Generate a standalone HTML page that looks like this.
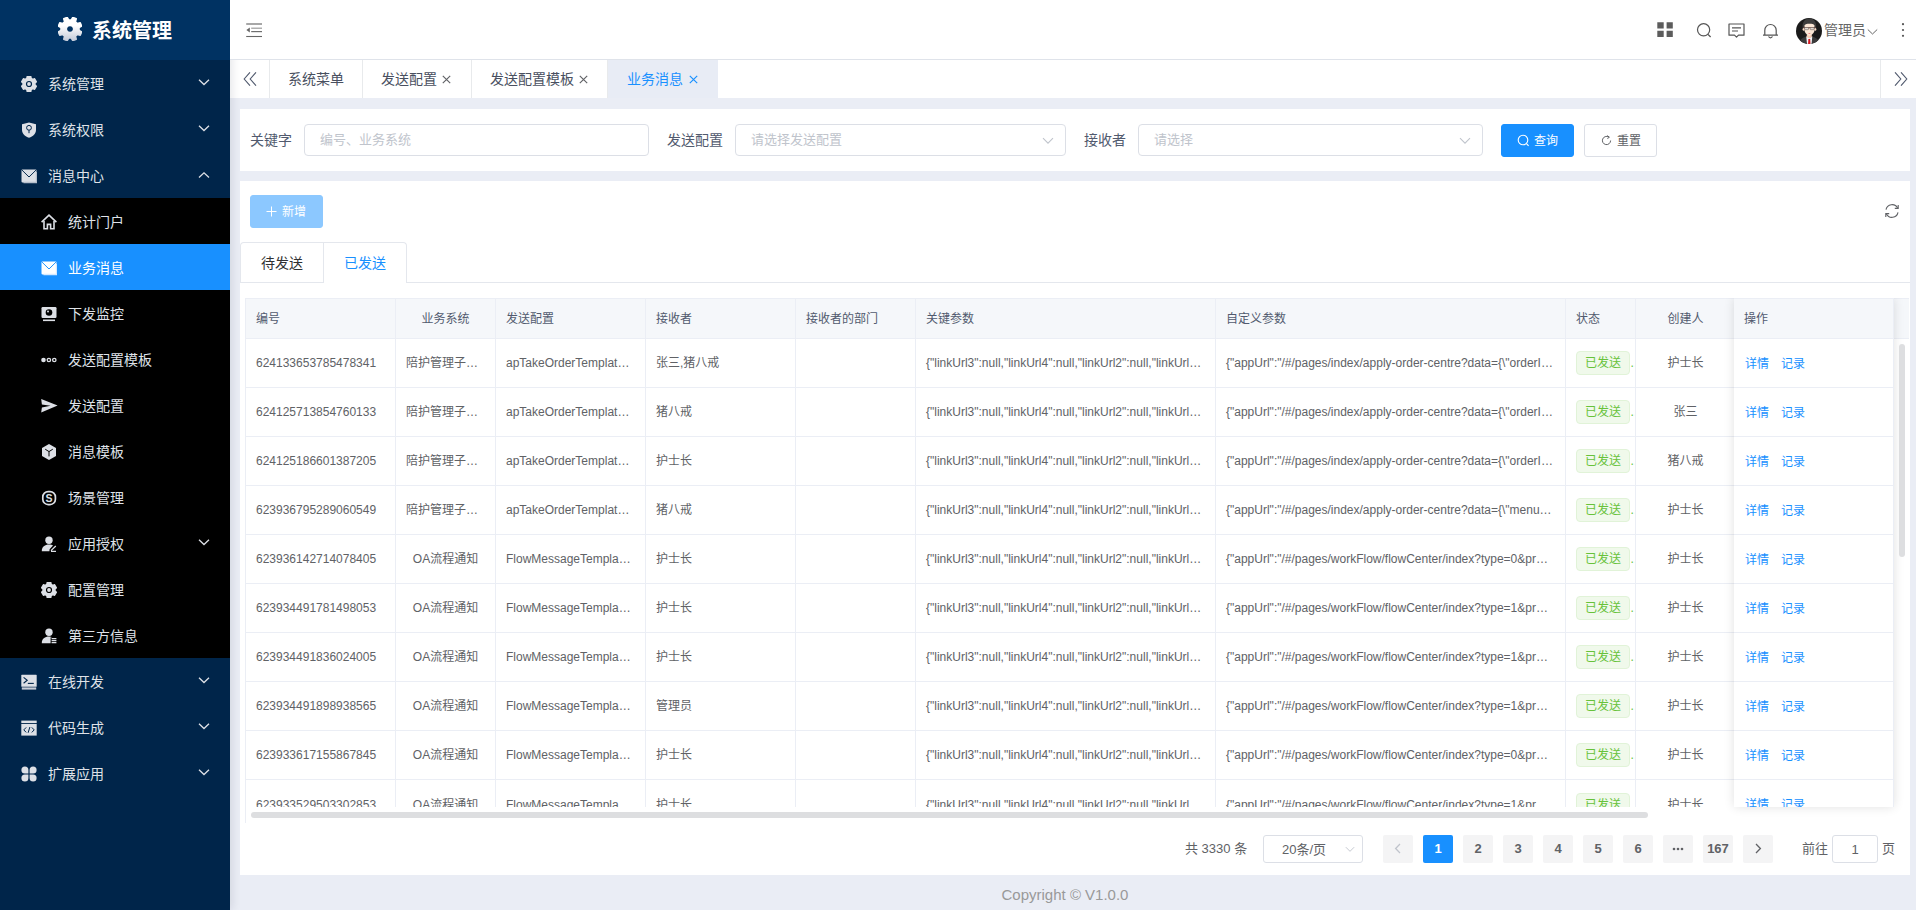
<!DOCTYPE html>
<html lang="zh-CN">
<head>
<meta charset="utf-8">
<title>业务消息</title>
<style>
*{box-sizing:border-box;margin:0;padding:0}
html,body{width:1916px;height:910px;overflow:hidden;background:#eaedf5;font-family:"Liberation Sans","Noto Sans CJK SC",sans-serif;font-size:14px;color:#303133}
.abs{position:absolute}
/* ---------- sidebar ---------- */
#side{position:absolute;left:0;top:0;width:230px;height:910px;background:#00254a;z-index:5;box-shadow:2px 0 9px rgba(0,21,41,.11)}
#logo{position:absolute;left:0;top:0;width:230px;height:60px;background:#003262}
#logo svg{position:absolute;left:58px;top:17px}
#logo span{position:absolute;left:92px;top:1px;line-height:60px;font-size:20px;font-weight:700;color:#fff;letter-spacing:0}
.mi{position:absolute;left:0;width:230px;height:46px;line-height:48px;color:#dfe2e8;font-size:14px}
.mi .t{position:absolute;left:48px;top:0;font-weight:400}
.mi.sub{background:#000}
.mi.sub .t{left:68px}
.mi.act{background:#1890ff;color:#fff}
.mi svg.ic{position:absolute;left:21px;top:16px}
.mi.sub svg.ic{left:41px}
.mi svg.ar{position:absolute;left:198px;top:17px}
/* ---------- header ---------- */
#head{position:absolute;left:230px;top:0;width:1686px;height:60px;background:#fff;border-bottom:1px solid #dfe3ea;z-index:6}
#tabs{position:absolute;left:230px;top:60px;width:1686px;height:38px;background:#fff}
.tab{position:absolute;top:0;height:38px;line-height:38px;font-size:14px;color:#495060;border-right:1px solid #e8eaec;white-space:nowrap}
.tab .x{position:absolute;top:0;font-size:13px;color:#606266}
.tab.on{background:#e8ecf5;color:#1890ff;border-right:none}
/* ---------- cards ---------- */
.card{position:absolute;background:#fff}
.lbl{position:absolute;font-size:14px;color:#515a6e;line-height:32px;top:124px}
.inp{position:absolute;top:124px;height:32px;border:1px solid #dcdfe6;border-radius:4px;background:#fff;font-size:13px;color:#c0c4cc;line-height:30px;padding-left:15px}
.btn{position:absolute;height:33px;border-radius:3px;font-size:12px;line-height:31px;text-align:center}
/* ---------- table ---------- */
#tbl{position:absolute;left:245px;top:298px;width:1648px;height:509px;overflow:hidden;border-top:1px solid #ebeef5;border-left:1px solid #ebeef5}
.tr{position:absolute;left:0;width:1647px;height:49px;border-bottom:1px solid #ebeef5}
.th{position:absolute;left:0;top:0;width:1647px;height:40px;background:#f5f7fa;border-bottom:1px solid #ebeef5}
.c{position:absolute;top:0;height:100%;border-right:1px solid #ebeef5;font-size:12px;color:#606266;padding:0 12px 0 10px;white-space:nowrap;overflow:hidden;text-overflow:ellipsis;line-height:48px}
.th .c{line-height:41px;color:#515a6e}
.c.ctr{text-align:center;padding:0 10px}
.tr.last .c{line-height:50px}
.tag{display:inline-block;height:24px;line-height:22px;padding:0 8px;position:relative;top:-1px;font-size:12px;color:#67c23a;background:#f0f9eb;border:1px solid #e1f3d8;border-radius:4px;vertical-align:middle}
.lk{color:#1890ff;font-size:12px}
#fix{position:absolute;left:20px;top:0;width:160px;height:509px;overflow:hidden;background:#fff;border-top:1px solid #ebeef5;box-shadow:0 0 10px rgba(0,0,0,.12);border-right:1px solid #ebeef5}
.fh{position:absolute;left:0;top:0;width:160px;height:40px;background:#f5f7fa;border-bottom:1px solid #ebeef5;line-height:41px;padding-left:10px;font-size:12px;color:#515a6e}
.fr{position:absolute;left:0;width:160px;height:49px;border-bottom:1px solid #ebeef5;line-height:51px}
.fr .lk{position:absolute;top:0}
/* ---------- pagination ---------- */
.pg{position:absolute;top:835px;height:28px;min-width:30px;width:30px;background:#f4f4f5;border-radius:2px;color:#606266;font-size:13px;font-weight:700;line-height:28px;text-align:center}
.pg.on{background:#1890ff;color:#fff}
</style>
</head>
<body>
<div id="side">
<div id="logo"><svg width="24" height="24" viewBox="0 0 16 16"><defs><linearGradient id="lg" x1="0" y1="0" x2="0" y2="1"><stop offset="0.35" stop-color="#ffffff"/><stop offset="1" stop-color="#c3cbd9"/></linearGradient></defs><path fill-rule="evenodd" stroke-linejoin="round" stroke="url(#lg)" stroke-width="1" fill="url(#lg)" d="M9.87 0.22 L12.18 1.18 L11.66 3.12 L12.88 4.34 L14.82 3.82 L15.78 6.13 L14.04 7.14 L14.04 8.86 L15.78 9.87 L14.82 12.18 L12.88 11.66 L11.66 12.88 L12.18 14.82 L9.87 15.78 L8.86 14.04 L7.14 14.04 L6.13 15.78 L3.82 14.82 L4.34 12.88 L3.12 11.66 L1.18 12.18 L0.22 9.87 L1.96 8.86 L1.96 7.14 L0.22 6.13 L1.18 3.82 L3.12 4.34 L4.34 3.12 L3.82 1.18 L6.13 0.22 L7.14 1.96 L8.86 1.96Z M8 5.60 a2.40 2.40 0 1 0 0.001 0Z"/></svg><span>系统管理</span></div>
<div class="mi" style="top:60px"><svg class="ic" width="16" height="16" viewBox="0 0 16 16"><path stroke-linejoin="round" stroke="#dde0e6" stroke-width="1.4" fill="#dde0e6" d="M6.24 0.50 L9.76 0.50 L10.21 2.42 L11.73 3.30 L13.61 2.73 L15.37 5.77 L13.94 7.12 L13.94 8.88 L15.37 10.23 L13.61 13.27 L11.73 12.70 L10.21 13.58 L9.76 15.50 L6.24 15.50 L5.79 13.58 L4.27 12.70 L2.39 13.27 L0.63 10.23 L2.06 8.88 L2.06 7.12 L0.63 5.77 L2.39 2.73 L4.27 3.30 L5.79 2.42Z"/><circle cx="8" cy="8" r="2.5" fill="none" stroke="#00254a" stroke-width="1.2"/></svg><span class="t">系统管理</span><svg class="ar" style="top:17.5px" width="12" height="8" viewBox="0 0 12 8"><path d="M1 1.8 L6 6.5 L11 1.8" fill="none" stroke="#dde0e6" stroke-width="1.3"/></svg></div>
<div class="mi" style="top:106px"><svg class="ic" width="16" height="16" viewBox="0 0 16 16"><path fill="#dde0e6" d="M8 0.6 L15 2.2 V8 C15 11.6 12 14.4 8 15.8 C4 14.4 1 11.6 1 8 V2.2Z"/><circle cx="8" cy="5.8" r="2.4" fill="none" stroke="#00254a" stroke-width="1"/><path d="M8 8.2V11.2" stroke="#00254a" stroke-width="1"/></svg><span class="t">系统权限</span><svg class="ar" style="top:17.5px" width="12" height="8" viewBox="0 0 12 8"><path d="M1 1.8 L6 6.5 L11 1.8" fill="none" stroke="#dde0e6" stroke-width="1.3"/></svg></div>
<div class="mi" style="top:152px"><svg class="ic" width="16" height="16" viewBox="0 0 16 16"><rect x="0.5" y="1.5" width="15" height="13" rx="1" fill="#dde0e6"/><path d="M0.8 1.9 L8 9 L15.2 1.9" fill="none" stroke="#00254a" stroke-width="0.95"/><path d="M15.5 4v10.5h-13" fill="none" stroke="#b7bfcc" stroke-width="1.4"/></svg><span class="t">消息中心</span><svg class="ar" style="top:18.5px" width="12" height="8" viewBox="0 0 12 8"><path d="M1 6.5 L6 1.8 L11 6.5" fill="none" stroke="#dde0e6" stroke-width="1.3"/></svg></div>
<div class="mi sub" style="top:198px"><svg class="ic" width="16" height="16" viewBox="0 0 16 16"><path d="M0.6 8.2 L8 1.2 L15.4 8.2" fill="none" stroke="#dde0e6" stroke-width="1.6" stroke-linejoin="miter"/><path d="M3 7v7.8h3.4v-4.4h3.2v4.4h3.4V7" fill="none" stroke="#dde0e6" stroke-width="1.6"/></svg><span class="t">统计门户</span></div>
<div class="mi sub act" style="top:244px"><svg class="ic" width="16" height="16" viewBox="0 0 16 16"><rect x="0.5" y="1.5" width="15" height="13" rx="1" fill="#fff"/><path d="M0.8 1.9 L8 9 L15.2 1.9" fill="none" stroke="#1890ff" stroke-width="0.95"/><path d="M15.5 4v10.5h-13" fill="none" stroke="#d6e9ff" stroke-width="1.4"/></svg><span class="t">业务消息</span></div>
<div class="mi sub" style="top:290px"><svg class="ic" width="16" height="16" viewBox="0 0 16 16"><rect x="0.5" y="1" width="15" height="11" rx="1.2" fill="#dde0e6"/><circle cx="8" cy="6.5" r="3.3" fill="#000"/><circle cx="7" cy="5.4" r="1" fill="#dde0e6"/><rect x="2" y="13.5" width="12" height="1.6" fill="#dde0e6"/></svg><span class="t">下发监控</span></div>
<div class="mi sub" style="top:336px"><svg class="ic" width="16" height="16" viewBox="0 0 16 16"><circle cx="2.5" cy="8" r="2.3" fill="#dde0e6"/><circle cx="7.9" cy="8" r="1.7" fill="none" stroke="#dde0e6" stroke-width="1.3"/><circle cx="13.3" cy="8" r="1.7" fill="none" stroke="#dde0e6" stroke-width="1.3"/></svg><span class="t">发送配置模板</span></div>
<div class="mi sub" style="top:382px"><svg class="ic" width="17" height="16" viewBox="0 0 17 16"><path fill="#dde0e6" d="M0.2 0.9 L16.6 7.6 L0.2 14.6 L0.9 9.4 L9.6 7.7 L0.9 6.4Z"/></svg><span class="t">发送配置</span></div>
<div class="mi sub" style="top:428px"><svg class="ic" width="16" height="16" viewBox="0 0 16 16"><path fill="#dde0e6" d="M8 0.1 L15 4 V12 L8 15.9 L1 12 V4Z"/><path d="M4.2 5.2 L8 7.6 L11.8 5.2 M8 7.6 V12.4" fill="none" stroke="#000" stroke-width="1"/></svg><span class="t">消息模板</span></div>
<div class="mi sub" style="top:474px"><svg class="ic" width="16" height="16" viewBox="0 0 16 16"><rect x="1.8" y="1.6" width="12.6" height="13" rx="5.4" fill="none" stroke="#dde0e6" stroke-width="1.7"/><text x="8.1" y="11.8" text-anchor="middle" font-family="Liberation Sans,sans-serif" font-size="10.5" font-weight="700" fill="#dde0e6">S</text></svg><span class="t">场景管理</span></div>
<div class="mi sub" style="top:520px"><svg class="ic" width="16" height="16" viewBox="0 0 16 16"><circle cx="8" cy="4.2" r="3.7" fill="#dde0e6"/><path fill="#dde0e6" d="M0.8 15.2 C0.8 10.8 4 8.6 8 8.6 C9.6 8.6 11 9 12 9.6 L8.6 13.2 L8.4 15.2Z"/><path d="M10 14.6 L14.8 10 M10 15.3h5" stroke="#dde0e6" stroke-width="1.3" fill="none"/></svg><span class="t">应用授权</span><svg class="ar" style="top:17.5px" width="12" height="8" viewBox="0 0 12 8"><path d="M1 1.8 L6 6.5 L11 1.8" fill="none" stroke="#dde0e6" stroke-width="1.3"/></svg></div>
<div class="mi sub" style="top:566px"><svg class="ic" width="16" height="16" viewBox="0 0 16 16"><path stroke-linejoin="round" stroke="#dde0e6" stroke-width="1.4" fill="#dde0e6" d="M6.24 0.50 L9.76 0.50 L10.21 2.42 L11.73 3.30 L13.61 2.73 L15.37 5.77 L13.94 7.12 L13.94 8.88 L15.37 10.23 L13.61 13.27 L11.73 12.70 L10.21 13.58 L9.76 15.50 L6.24 15.50 L5.79 13.58 L4.27 12.70 L2.39 13.27 L0.63 10.23 L2.06 8.88 L2.06 7.12 L0.63 5.77 L2.39 2.73 L4.27 3.30 L5.79 2.42Z"/><circle cx="8" cy="8" r="2.5" fill="none" stroke="#000" stroke-width="1.2"/></svg><span class="t">配置管理</span></div>
<div class="mi sub" style="top:612px"><svg class="ic" width="16" height="16" viewBox="0 0 16 16"><circle cx="8" cy="4.2" r="3.7" fill="#dde0e6"/><path fill="#dde0e6" d="M0.8 15.2 C0.8 10.8 4 8.6 8 8.6 C9.3 8.6 10.4 8.9 11.3 9.3 H9.6 V15.2Z"/><path d="M10.6 10.6h4.8 M10.6 12.6h4.8 M10.6 14.6h4.8" stroke="#dde0e6" stroke-width="1.2" fill="none"/></svg><span class="t">第三方信息</span></div>
<div class="mi" style="top:658px"><svg class="ic" width="16" height="16" viewBox="0 0 16 16"><rect x="0.3" y="0.8" width="15.4" height="12" rx="0.6" fill="#dde0e6"/><path d="M2.6 3.4 L6.2 6.3 L2.6 9.2" fill="none" stroke="#00254a" stroke-width="1.1"/><path d="M6.8 9.4h6" stroke="#00254a" stroke-width="1.1"/><rect x="0.8" y="13.4" width="14.4" height="2.2" fill="#c9ced8"/></svg><span class="t">在线开发</span><svg class="ar" style="top:17.5px" width="12" height="8" viewBox="0 0 12 8"><path d="M1 1.8 L6 6.5 L11 1.8" fill="none" stroke="#dde0e6" stroke-width="1.3"/></svg></div>
<div class="mi" style="top:704px"><svg class="ic" width="16" height="16" viewBox="0 0 16 16"><rect x="0.3" y="0.6" width="15.4" height="2.4" fill="#dde0e6"/><rect x="0.3" y="3.9" width="15.4" height="11.7" fill="#dde0e6"/><path d="M5.2 7.4 L2.8 9.9 L5.2 12.4 M10.8 7.4 L13.2 9.9 L10.8 12.4 M8.9 7 L7.1 12.8" fill="none" stroke="#00254a" stroke-width="1"/></svg><span class="t">代码生成</span><svg class="ar" style="top:17.5px" width="12" height="8" viewBox="0 0 12 8"><path d="M1 1.8 L6 6.5 L11 1.8" fill="none" stroke="#dde0e6" stroke-width="1.3"/></svg></div>
<div class="mi" style="top:750px"><svg class="ic" width="16" height="16" viewBox="0 0 16 16"><path fill="#dde0e6" d="M3.9 0.4a3.5 3.5 0 0 1 3.5 3.5v3.5h-3.5a3.5 3.5 0 0 1 0-7Z M12.1 0.4a3.5 3.5 0 0 1 0 7h-3.5v-3.5a3.5 3.5 0 0 1 3.5-3.5Z M3.9 15.6a3.5 3.5 0 0 1 0-7h3.5v3.5a3.5 3.5 0 0 1-3.5 3.5Z M12.1 15.6a3.5 3.5 0 0 1-3.5-3.5v-3.5h3.5a3.5 3.5 0 0 1 0 7Z"/></svg><span class="t">扩展应用</span><svg class="ar" style="top:17.5px" width="12" height="8" viewBox="0 0 12 8"><path d="M1 1.8 L6 6.5 L11 1.8" fill="none" stroke="#dde0e6" stroke-width="1.3"/></svg></div>
</div>
<div id="head">
<svg class="abs" style="left:16px;top:23px" width="16" height="15" viewBox="0 0 16 15"><path d="M0.2 1h15.8" stroke="#8a8a8a" stroke-width="1.5" fill="none"/><path d="M5.2 5.2h10.8" stroke="#9a9a9a" stroke-width="1.2" fill="none"/><path d="M5.2 8.6h10.8" stroke="#6e6e6e" stroke-width="1.2" fill="none"/><path d="M0.2 13.5h15.8" stroke="#666" stroke-width="1.1" fill="none"/><path d="M0.4 6.9 L3.8 4.4 V9.4Z" fill="#666"/></svg>
<svg class="abs" style="left:1427px;top:22px" width="16" height="15" viewBox="0 0 16 15"><path fill="#5c5c5c" d="M0.3 0.2h6.4v6.2h-6.4Z M9.6 0.2h6.2v6.2h-6.2Z M0.3 8.8h6.4v6.2h-6.4Z M9.6 8.8h6.2v6.2h-6.2Z"/></svg>
<svg class="abs" style="left:1466px;top:22px" width="17" height="17" viewBox="0 0 17 17"><circle cx="7.6" cy="7.8" r="6.1" fill="none" stroke="#555" stroke-width="1.2"/><path d="M12 12.4 L14.6 15" stroke="#555" stroke-width="1.3" fill="none"/></svg>
<svg class="abs" style="left:1498px;top:23px" width="17" height="17" viewBox="0 0 17 17"><path d="M1 1h15v11.2h-5.5l-2 2-2-2H1Z" fill="none" stroke="#555" stroke-width="1.2" stroke-linejoin="round"/><path d="M4 4.8h9 M4 8h6" stroke="#555" stroke-width="1.2"/></svg>
<svg class="abs" style="left:1532px;top:22px" width="17" height="17" viewBox="0 0 17 17"><path d="M1 13.2h15 M2.8 13.2V8.2a5.7 5.7 0 0 1 11.4 0v5" fill="none" stroke="#555" stroke-width="1.2"/><path d="M6.6 14.4a2 2 0 0 0 3.8 0" fill="none" stroke="#555" stroke-width="1.2"/></svg>
<svg class="abs" style="left:1566px;top:18px" width="26" height="26" viewBox="0 0 26 26"><defs><clipPath id="av"><circle cx="13" cy="13" r="13"/></clipPath></defs><g clip-path="url(#av)"><rect width="26" height="26" fill="#1b1b1b"/><path d="M2.5 26 C3.5 21.5 6.5 19.6 10.4 18.4 L13.3 21 L16.2 18.4 C20 19.6 23 21.5 24 26Z" fill="#3b3b3b"/><path d="M10.2 18.3 L13.3 19.8 L16.3 18.3 L15.6 26 H11Z" fill="#f3f6f8"/><path d="M10.8 16.4h5v2.6l-2.5 1.4l-2.5-1.4Z" fill="#f7cdb5"/><path d="M12.4 21h1.8l0.3 5h-2.4Z" fill="#d4141c"/><path d="M6.7 10.6 C6 4.5 8.5 0.6 13.4 0.6 C18.4 0.6 20.8 4.5 20.1 10.6 L18.6 10.2 V7 H8.4 V10.2Z" fill="#3d3d3d"/><ellipse cx="7.6" cy="11.3" rx="1" ry="1.5" fill="#f9dcc6"/><ellipse cx="19.3" cy="11.3" rx="1" ry="1.5" fill="#f9dcc6"/><path d="M8.5 7.6 C9.5 6 11 5.8 13.4 5.8 C16 5.8 17.6 6 18.5 7.6 V12 C18.5 14.6 15.6 17.7 13.4 17.7 C11.3 17.7 8.5 14.6 8.5 12Z" fill="#fbe7d6"/><path d="M7 9.7h12.8" stroke="#5a3a36" stroke-width="0.9" fill="none"/><rect x="8.6" y="9.6" width="3.9" height="2.1" rx="0.6" fill="#e6e2dc" stroke="#5a4a46" stroke-width="0.5"/><rect x="14.2" y="9.6" width="3.9" height="2.1" rx="0.6" fill="#e6e2dc" stroke="#5a4a46" stroke-width="0.5"/><path d="M12.2 14.9 Q13.4 16.1 14.6 14.9 Q13.4 15.3 12.2 14.9Z" fill="#e8323c"/></g></svg>
<span class="abs" style="left:1594px;top:0;line-height:61px;font-size:14px;color:#666">管理员</span>
<svg class="abs" style="left:1637px;top:28px" width="11" height="8" viewBox="0 0 11 8"><path d="M0.8 1.5 L5.5 6 L10.2 1.5" fill="none" stroke="#666" stroke-width="1"/></svg>
<svg class="abs" style="left:1671px;top:22px" width="4" height="16" viewBox="0 0 4 16"><circle cx="2" cy="2.2" r="1.1" fill="#555"/><circle cx="2" cy="8" r="1.1" fill="#555"/><circle cx="2" cy="13.8" r="1.1" fill="#555"/></svg>
</div>
<div id="tabs">
<div class="tab" style="left:0;width:40px"><svg class="abs" style="left:13px;top:12px" width="15" height="14" viewBox="0 0 15 14"><path d="M7 0.3 L1.2 7 L7 13.7 M13 0.3 L7.2 7 L13 13.7" fill="none" stroke="#515a6e" stroke-width="1.1"/></svg></div>
<div class="tab" style="left:40px;width:93px;padding-left:18px">系统菜单</div>
<div class="tab" style="left:133px;width:109px;padding-left:18px">发送配置<svg style="position:absolute;top:15px;right:20px" width="9" height="9" viewBox="0 0 9 9"><path d="M0.8 0.8 L8.2 8.2 M8.2 0.8 L0.8 8.2" stroke="#606266" stroke-width="1.15" fill="none"/></svg></div>
<div class="tab" style="left:242px;width:136px;padding-left:18px">发送配置模板<svg style="position:absolute;top:15px;right:19px" width="9" height="9" viewBox="0 0 9 9"><path d="M0.8 0.8 L8.2 8.2 M8.2 0.8 L0.8 8.2" stroke="#606266" stroke-width="1.15" fill="none"/></svg></div>
<div class="tab on" style="left:378px;width:110px;padding-left:19px">业务消息<svg style="position:absolute;top:15px;right:20px" width="9" height="9" viewBox="0 0 9 9"><path d="M0.8 0.8 L8.2 8.2 M8.2 0.8 L0.8 8.2" stroke="#1890ff" stroke-width="1.15" fill="none"/></svg></div>
<div class="tab" style="left:1650px;width:36px;border-right:none;border-left:1px solid #e8eaec"><svg class="abs" style="left:11.5px;top:12px" width="15" height="14" viewBox="0 0 15 14"><path d="M2 0.3 L7.8 7 L2 13.7 M8 0.3 L13.8 7 L8 13.7" fill="none" stroke="#515a6e" stroke-width="1.1"/></svg></div>
</div>
<div class="card" style="left:240px;top:109px;width:1670px;height:62px"></div>
<span class="lbl" style="left:250px">关键字</span>
<div class="inp" style="left:304px;width:345px">编号、业务系统</div>
<span class="lbl" style="left:667px">发送配置</span>
<div class="inp" style="left:735px;width:331px">请选择发送配置</div><svg class="abs" style="left:1042px;top:137px" width="12" height="8" viewBox="0 0 12 8"><path d="M1 1.2 L6 6.2 L11 1.2" fill="none" stroke="#c0c4cc" stroke-width="1.1"/></svg>
<span class="lbl" style="left:1084px">接收者</span>
<div class="inp" style="left:1138px;width:345px">请选择</div><svg class="abs" style="left:1459px;top:137px" width="12" height="8" viewBox="0 0 12 8"><path d="M1 1.2 L6 6.2 L11 1.2" fill="none" stroke="#c0c4cc" stroke-width="1.1"/></svg>
<div class="btn" style="left:1501px;top:124px;width:73px;background:#1890ff;border:1px solid #1890ff;color:#fff;padding-left:17px;line-height:33px"><svg class="abs" style="left:15px;top:9px" width="13" height="13" viewBox="0 0 13 13"><circle cx="6" cy="6" r="4.8" fill="none" stroke="#fff" stroke-width="1.1"/><path d="M9.5 9.6 L11.6 11.8" stroke="#fff" stroke-width="1.2"/></svg>查询</div>
<div class="btn" style="left:1584px;top:124px;width:73px;background:#fff;border:1px solid #dcdfe6;color:#606266;padding-left:17px;line-height:33px"><svg class="abs" style="left:16px;top:10px" width="11" height="11" viewBox="0 0 11 11"><path d="M9.6 5.5 A4.1 4.1 0 1 1 7.6 2" fill="none" stroke="#606266" stroke-width="1"/><path d="M6.2 0.6 L8.4 2.2 L6.4 3.6" fill="none" stroke="#606266" stroke-width="1"/></svg>重置</div>
<div class="card" style="left:240px;top:181px;width:1670px;height:694px"></div>
<div class="btn" style="left:250px;top:195px;width:73px;background:#8cc8ff;border:1px solid #8cc8ff;color:#fff;padding-left:15px;line-height:33px"><svg class="abs" style="left:15px;top:10px" width="11" height="11" viewBox="0 0 11 11"><path d="M5.5 0.5v10 M0.5 5.5h10" stroke="#fff" stroke-width="1" fill="none"/></svg>新增</div>
<svg class="abs" style="left:1884px;top:203px" width="16" height="16" viewBox="0 0 16 16"><path d="M2 6.6 A6.2 6.2 0 0 1 13.6 5 M14 9.4 A6.2 6.2 0 0 1 2.4 11" fill="none" stroke="#606266" stroke-width="1.1"/><path d="M14.2 2 V5.4 H10.8 M1.8 14 V10.6 H5.2" fill="none" stroke="#606266" stroke-width="1.1"/></svg>
<div class="abs" style="left:240px;top:282px;width:1670px;height:1px;background:#e4e7ed"></div>
<div class="abs" style="left:240px;top:242px;width:167px;height:41px;border:1px solid #e4e7ed;border-bottom:none;border-radius:4px 4px 0 0"></div>
<div class="abs" style="left:323px;top:243px;width:1px;height:39px;background:#e4e7ed"></div>
<div class="abs" style="left:324px;top:282px;width:82px;height:1px;background:#fff"></div>
<span class="abs" style="left:261px;top:243px;line-height:40px;font-size:14px;color:#303133">待发送</span>
<span class="abs" style="left:344px;top:243px;line-height:40px;font-size:14px;color:#1890ff">已发送</span>
<div id="tbl">
<div class="th">
<div class="c" style="left:0px;width:150px">编号</div>
<div class="c ctr" style="left:150px;width:100px">业务系统</div>
<div class="c" style="left:250px;width:150px">发送配置</div>
<div class="c" style="left:400px;width:150px">接收者</div>
<div class="c" style="left:550px;width:120px">接收者的部门</div>
<div class="c" style="left:670px;width:300px">关键参数</div>
<div class="c" style="left:970px;width:350px">自定义参数</div>
<div class="c" style="left:1320px;width:70px">状态</div>
<div class="c ctr" style="left:1390px;width:100px">创建人</div>
</div>
<div class="tr" style="top:40px">
<div class="c" style="left:0px;width:150px">624133653785478341</div>
<div class="c ctr" style="left:150px;width:100px">陪护管理子系统</div>
<div class="c" style="left:250px;width:150px">apTakeOrderTemplateCode</div>
<div class="c" style="left:400px;width:150px">张三,猪八戒</div>
<div class="c" style="left:550px;width:120px"></div>
<div class="c" style="left:670px;width:300px">{&quot;linkUrl3&quot;:null,&quot;linkUrl4&quot;:null,&quot;linkUrl2&quot;:null,&quot;linkUrl1&quot;:null}</div>
<div class="c" style="left:970px;width:350px">{&quot;appUrl&quot;:&quot;/#/pages/index/apply-order-centre?data={\&quot;orderId\&quot;:\&quot;1\&quot;}&quot;}</div>
<div class="c" style="left:1320px;width:70px;"><span class="tag">已发送</span></div>
<div class="c ctr" style="left:1390px;width:100px">护士长</div>
</div>
<div class="tr" style="top:89px">
<div class="c" style="left:0px;width:150px">624125713854760133</div>
<div class="c ctr" style="left:150px;width:100px">陪护管理子系统</div>
<div class="c" style="left:250px;width:150px">apTakeOrderTemplateCode</div>
<div class="c" style="left:400px;width:150px">猪八戒</div>
<div class="c" style="left:550px;width:120px"></div>
<div class="c" style="left:670px;width:300px">{&quot;linkUrl3&quot;:null,&quot;linkUrl4&quot;:null,&quot;linkUrl2&quot;:null,&quot;linkUrl1&quot;:null}</div>
<div class="c" style="left:970px;width:350px">{&quot;appUrl&quot;:&quot;/#/pages/index/apply-order-centre?data={\&quot;orderId\&quot;:\&quot;1\&quot;}&quot;}</div>
<div class="c" style="left:1320px;width:70px;"><span class="tag">已发送</span></div>
<div class="c ctr" style="left:1390px;width:100px">张三</div>
</div>
<div class="tr" style="top:138px">
<div class="c" style="left:0px;width:150px">624125186601387205</div>
<div class="c ctr" style="left:150px;width:100px">陪护管理子系统</div>
<div class="c" style="left:250px;width:150px">apTakeOrderTemplateCode</div>
<div class="c" style="left:400px;width:150px">护士长</div>
<div class="c" style="left:550px;width:120px"></div>
<div class="c" style="left:670px;width:300px">{&quot;linkUrl3&quot;:null,&quot;linkUrl4&quot;:null,&quot;linkUrl2&quot;:null,&quot;linkUrl1&quot;:null}</div>
<div class="c" style="left:970px;width:350px">{&quot;appUrl&quot;:&quot;/#/pages/index/apply-order-centre?data={\&quot;orderId\&quot;:\&quot;1\&quot;}&quot;}</div>
<div class="c" style="left:1320px;width:70px;"><span class="tag">已发送</span></div>
<div class="c ctr" style="left:1390px;width:100px">猪八戒</div>
</div>
<div class="tr" style="top:187px">
<div class="c" style="left:0px;width:150px">623936795289060549</div>
<div class="c ctr" style="left:150px;width:100px">陪护管理子系统</div>
<div class="c" style="left:250px;width:150px">apTakeOrderTemplateCode</div>
<div class="c" style="left:400px;width:150px">猪八戒</div>
<div class="c" style="left:550px;width:120px"></div>
<div class="c" style="left:670px;width:300px">{&quot;linkUrl3&quot;:null,&quot;linkUrl4&quot;:null,&quot;linkUrl2&quot;:null,&quot;linkUrl1&quot;:null}</div>
<div class="c" style="left:970px;width:350px">{&quot;appUrl&quot;:&quot;/#/pages/index/apply-order-centre?data={\&quot;menuId\&quot;:\&quot;1\&quot;}&quot;}</div>
<div class="c" style="left:1320px;width:70px;"><span class="tag">已发送</span></div>
<div class="c ctr" style="left:1390px;width:100px">护士长</div>
</div>
<div class="tr" style="top:236px">
<div class="c" style="left:0px;width:150px">623936142714078405</div>
<div class="c ctr" style="left:150px;width:100px">OA流程通知</div>
<div class="c" style="left:250px;width:150px">FlowMessageTemplateCode</div>
<div class="c" style="left:400px;width:150px">护士长</div>
<div class="c" style="left:550px;width:120px"></div>
<div class="c" style="left:670px;width:300px">{&quot;linkUrl3&quot;:null,&quot;linkUrl4&quot;:null,&quot;linkUrl2&quot;:null,&quot;linkUrl1&quot;:null}</div>
<div class="c" style="left:970px;width:350px">{&quot;appUrl&quot;:&quot;/#/pages/workFlow/flowCenter/index?type=0&amp;processId=1&quot;}</div>
<div class="c" style="left:1320px;width:70px;"><span class="tag">已发送</span></div>
<div class="c ctr" style="left:1390px;width:100px">护士长</div>
</div>
<div class="tr" style="top:285px">
<div class="c" style="left:0px;width:150px">623934491781498053</div>
<div class="c ctr" style="left:150px;width:100px">OA流程通知</div>
<div class="c" style="left:250px;width:150px">FlowMessageTemplateCode</div>
<div class="c" style="left:400px;width:150px">护士长</div>
<div class="c" style="left:550px;width:120px"></div>
<div class="c" style="left:670px;width:300px">{&quot;linkUrl3&quot;:null,&quot;linkUrl4&quot;:null,&quot;linkUrl2&quot;:null,&quot;linkUrl1&quot;:null}</div>
<div class="c" style="left:970px;width:350px">{&quot;appUrl&quot;:&quot;/#/pages/workFlow/flowCenter/index?type=1&amp;processId=1&quot;}</div>
<div class="c" style="left:1320px;width:70px;"><span class="tag">已发送</span></div>
<div class="c ctr" style="left:1390px;width:100px">护士长</div>
</div>
<div class="tr" style="top:334px">
<div class="c" style="left:0px;width:150px">623934491836024005</div>
<div class="c ctr" style="left:150px;width:100px">OA流程通知</div>
<div class="c" style="left:250px;width:150px">FlowMessageTemplateCode</div>
<div class="c" style="left:400px;width:150px">护士长</div>
<div class="c" style="left:550px;width:120px"></div>
<div class="c" style="left:670px;width:300px">{&quot;linkUrl3&quot;:null,&quot;linkUrl4&quot;:null,&quot;linkUrl2&quot;:null,&quot;linkUrl1&quot;:null}</div>
<div class="c" style="left:970px;width:350px">{&quot;appUrl&quot;:&quot;/#/pages/workFlow/flowCenter/index?type=1&amp;processId=1&quot;}</div>
<div class="c" style="left:1320px;width:70px;"><span class="tag">已发送</span></div>
<div class="c ctr" style="left:1390px;width:100px">护士长</div>
</div>
<div class="tr" style="top:383px">
<div class="c" style="left:0px;width:150px">623934491898938565</div>
<div class="c ctr" style="left:150px;width:100px">OA流程通知</div>
<div class="c" style="left:250px;width:150px">FlowMessageTemplateCode</div>
<div class="c" style="left:400px;width:150px">管理员</div>
<div class="c" style="left:550px;width:120px"></div>
<div class="c" style="left:670px;width:300px">{&quot;linkUrl3&quot;:null,&quot;linkUrl4&quot;:null,&quot;linkUrl2&quot;:null,&quot;linkUrl1&quot;:null}</div>
<div class="c" style="left:970px;width:350px">{&quot;appUrl&quot;:&quot;/#/pages/workFlow/flowCenter/index?type=1&amp;processId=1&quot;}</div>
<div class="c" style="left:1320px;width:70px;"><span class="tag">已发送</span></div>
<div class="c ctr" style="left:1390px;width:100px">护士长</div>
</div>
<div class="tr" style="top:432px">
<div class="c" style="left:0px;width:150px">623933617155867845</div>
<div class="c ctr" style="left:150px;width:100px">OA流程通知</div>
<div class="c" style="left:250px;width:150px">FlowMessageTemplateCode</div>
<div class="c" style="left:400px;width:150px">护士长</div>
<div class="c" style="left:550px;width:120px"></div>
<div class="c" style="left:670px;width:300px">{&quot;linkUrl3&quot;:null,&quot;linkUrl4&quot;:null,&quot;linkUrl2&quot;:null,&quot;linkUrl1&quot;:null}</div>
<div class="c" style="left:970px;width:350px">{&quot;appUrl&quot;:&quot;/#/pages/workFlow/flowCenter/index?type=0&amp;processId=1&quot;}</div>
<div class="c" style="left:1320px;width:70px;"><span class="tag">已发送</span></div>
<div class="c ctr" style="left:1390px;width:100px">护士长</div>
</div>
<div class="tr last" style="top:481px">
<div class="c" style="left:0px;width:150px">623933529503302853</div>
<div class="c ctr" style="left:150px;width:100px">OA流程通知</div>
<div class="c" style="left:250px;width:150px">FlowMessageTemplateCode</div>
<div class="c" style="left:400px;width:150px">护士长</div>
<div class="c" style="left:550px;width:120px"></div>
<div class="c" style="left:670px;width:300px">{&quot;linkUrl3&quot;:null,&quot;linkUrl4&quot;:null,&quot;linkUrl2&quot;:null,&quot;linkUrl1&quot;:null}</div>
<div class="c" style="left:970px;width:350px">{&quot;appUrl&quot;:&quot;/#/pages/workFlow/flowCenter/index?type=1&amp;processId=1&quot;}</div>
<div class="c" style="left:1320px;width:70px;"><span class="tag">已发送</span></div>
<div class="c ctr" style="left:1390px;width:100px">护士长</div>
</div>
</div>
<div class="abs" style="left:1894px;top:298px;width:15px;height:41px;background:#f5f7fa;border-top:1px solid #ebeef5;border-bottom:1px solid #ebeef5"></div>
<div class="abs" style="left:1714px;top:298px;width:196px;height:530px;overflow:hidden;pointer-events:none">
<div id="fix">
<div class="fh">操作</div>
<div class="fr" style="top:40px"><span class="lk" style="left:11px">详情</span><span class="lk" style="left:47px">记录</span></div>
<div class="fr" style="top:89px"><span class="lk" style="left:11px">详情</span><span class="lk" style="left:47px">记录</span></div>
<div class="fr" style="top:138px"><span class="lk" style="left:11px">详情</span><span class="lk" style="left:47px">记录</span></div>
<div class="fr" style="top:187px"><span class="lk" style="left:11px">详情</span><span class="lk" style="left:47px">记录</span></div>
<div class="fr" style="top:236px"><span class="lk" style="left:11px">详情</span><span class="lk" style="left:47px">记录</span></div>
<div class="fr" style="top:285px"><span class="lk" style="left:11px">详情</span><span class="lk" style="left:47px">记录</span></div>
<div class="fr" style="top:334px"><span class="lk" style="left:11px">详情</span><span class="lk" style="left:47px">记录</span></div>
<div class="fr" style="top:383px"><span class="lk" style="left:11px">详情</span><span class="lk" style="left:47px">记录</span></div>
<div class="fr" style="top:432px"><span class="lk" style="left:11px">详情</span><span class="lk" style="left:47px">记录</span></div>
<div class="fr" style="top:481px"><span class="lk" style="left:11px">详情</span><span class="lk" style="left:47px">记录</span></div>
</div></div>
<div class="abs" style="left:251px;top:812px;width:1397px;height:6px;border-radius:3px;background:#dddee0"></div>
<div class="abs" style="left:245px;top:807px;width:1px;height:16px;background:#ebeef5"></div>
<div class="abs" style="left:1899px;top:344px;width:6px;height:213px;border-radius:3px;background:#dddee0"></div>
<span class="abs" style="left:1185px;top:835px;line-height:28px;font-size:13px;color:#606266">共 3330 条</span>
<div class="abs" style="left:1263px;top:835px;width:100px;height:28px;border:1px solid #dcdfe6;border-radius:3px;font-size:13px;color:#606266;line-height:27px;padding-left:18px">20条/页</div>
<svg class="abs" style="left:1345px;top:846px" width="10" height="7" viewBox="0 0 12 8"><path d="M1 1.2 L6 6.2 L11 1.2" fill="none" stroke="#c0c4cc" stroke-width="1.1"/></svg>
<div class="pg" style="left:1383px"><svg width="8" height="11" viewBox="0 0 8 11" style="vertical-align:-1px"><path d="M6 1 L1.6 5.5 L6 10" fill="none" stroke="#c0c4cc" stroke-width="1.3"/></svg></div>
<div class="pg on" style="left:1423px">1</div>
<div class="pg" style="left:1463px">2</div>
<div class="pg" style="left:1503px">3</div>
<div class="pg" style="left:1543px">4</div>
<div class="pg" style="left:1583px">5</div>
<div class="pg" style="left:1623px">6</div>
<div class="pg" style="left:1663px"><svg width="12" height="4" viewBox="0 0 12 4" style="vertical-align:2px"><circle cx="2" cy="2" r="1.3" fill="#606266"/><circle cx="6" cy="2" r="1.3" fill="#606266"/><circle cx="10" cy="2" r="1.3" fill="#606266"/></svg></div>
<div class="pg" style="left:1703px">167</div>
<div class="pg" style="left:1743px"><svg width="8" height="11" viewBox="0 0 8 11" style="vertical-align:-1px"><path d="M2 1 L6.4 5.5 L2 10" fill="none" stroke="#606266" stroke-width="1.3"/></svg></div>
<span class="abs" style="left:1802px;top:835px;line-height:28px;font-size:13px;color:#606266">前往</span>
<div class="abs" style="left:1832px;top:835px;width:46px;height:28px;border:1px solid #dcdfe6;border-radius:3px;font-size:13px;color:#606266;line-height:27px;text-align:center">1</div>
<span class="abs" style="left:1882px;top:835px;line-height:28px;font-size:13px;color:#606266">页</span>
<div class="abs" style="left:230px;top:880px;width:1670px;text-align:center;font-size:15px;line-height:30px;color:#999">Copyright © V1.0.0</div>
</body>
</html>
